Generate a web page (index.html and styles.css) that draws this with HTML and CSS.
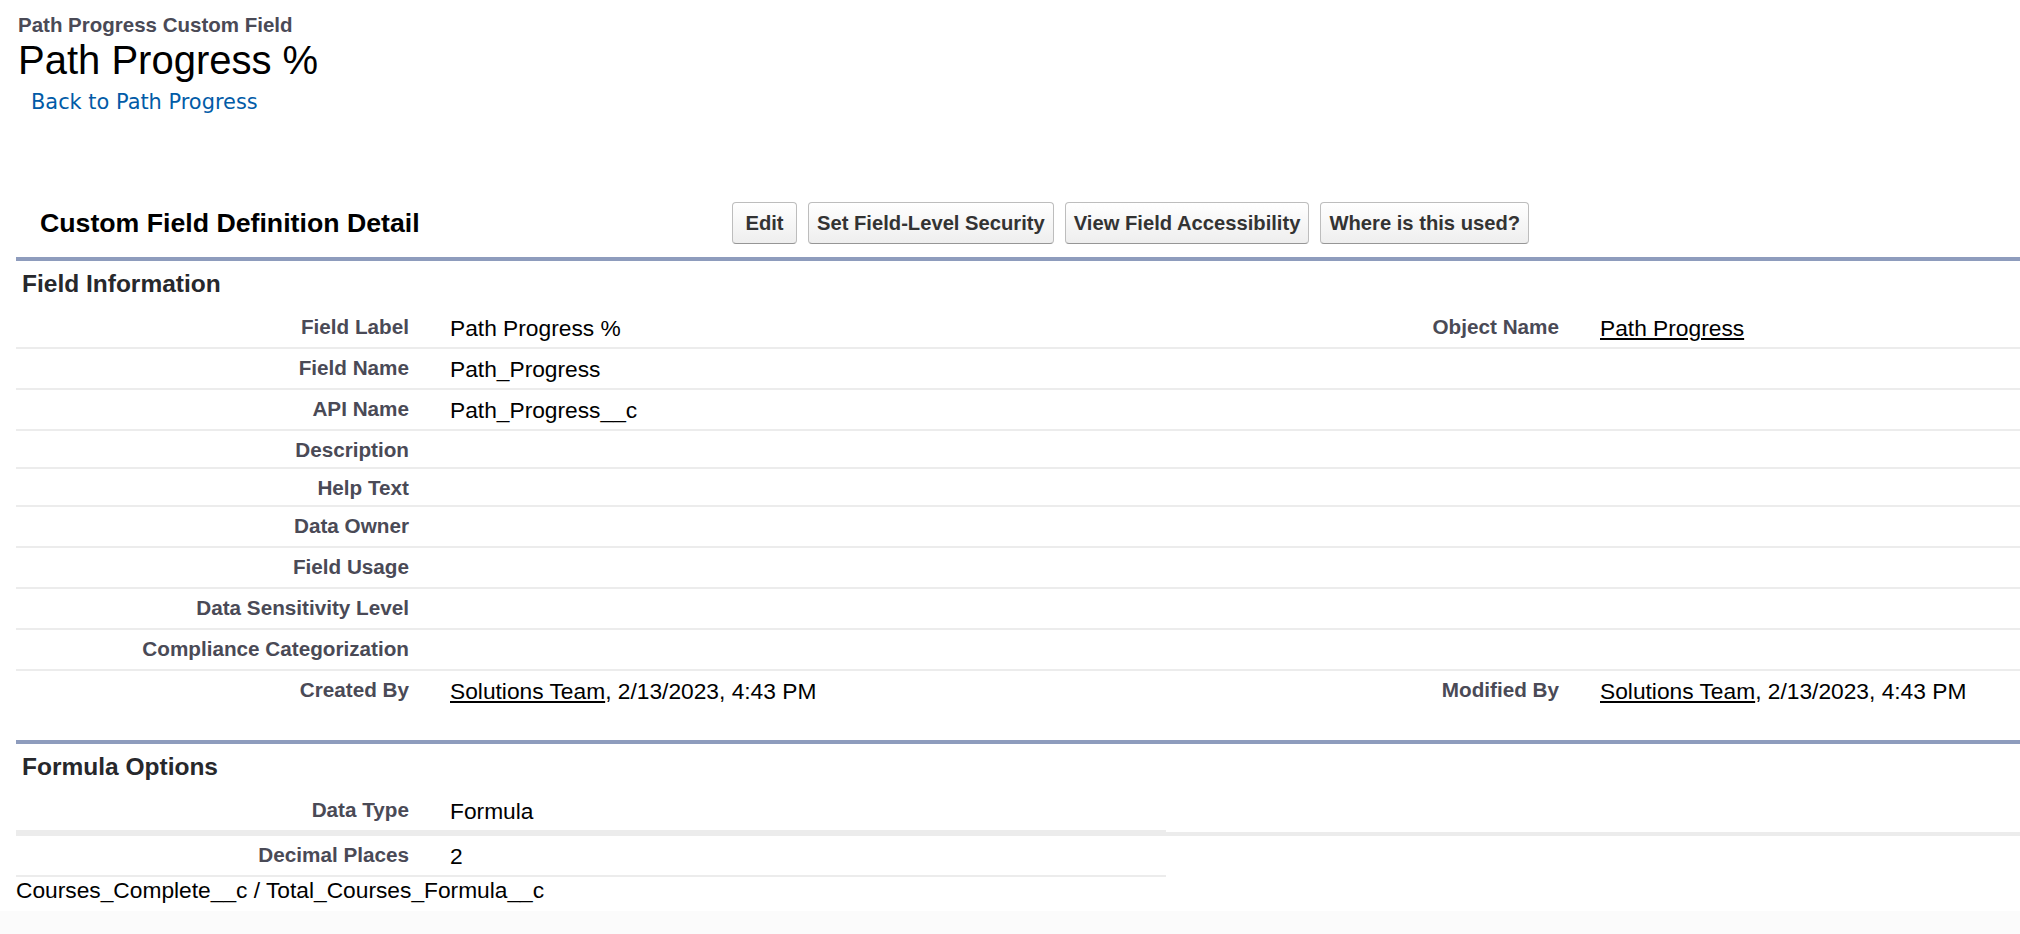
FILE: index.html
```html
<!DOCTYPE html>
<html lang="en">
<head>
<meta charset="UTF-8">
<title>Path Progress % - Custom Field</title>
<link rel="stylesheet" href="styles.css">
</head>
<body>
<div class="page">
  <div class="bPageTitle">
    <div class="pageType">Path Progress Custom Field</div>
    <h1 class="pageDescription">Path Progress %</h1>
    <div class="ptBreadcrumb"><a href="#">Back to Path Progress</a></div>
  </div>

  <div class="pbHeader">
    <div class="pbTitle"><h2>Custom Field Definition Detail</h2></div>
    <div class="pbButton">
      <button class="btn btn-edit">Edit</button>
      <button class="btn">Set Field-Level Security</button>
      <button class="btn">View Field Accessibility</button>
      <button class="btn">Where is this used?</button>
    </div>
  </div>

  <div class="pbSection">
    <h3 class="pbSubheader">Field Information</h3>
    <table class="detailList">
      <colgroup><col class="c-label"><col class="c-data"><col class="c-label"><col class="c-data"></colgroup>
      <tr>
        <td class="labelCol">Field Label</td><td class="dataCol">Path Progress %</td>
        <td class="labelCol">Object Name</td><td class="dataCol"><a href="#">Path Progress</a></td>
      </tr>
      <tr>
        <td class="labelCol">Field Name</td><td class="dataCol">Path_Progress</td>
        <td class="labelCol"></td><td class="dataCol"></td>
      </tr>
      <tr>
        <td class="labelCol">API Name</td><td class="dataCol">Path_Progress__c</td>
        <td class="labelCol"></td><td class="dataCol"></td>
      </tr>
      <tr>
        <td class="labelCol">Description</td><td class="dataCol"></td>
        <td class="labelCol"></td><td class="dataCol"></td>
      </tr>
      <tr>
        <td class="labelCol">Help Text</td><td class="dataCol"></td>
        <td class="labelCol"></td><td class="dataCol"></td>
      </tr>
      <tr>
        <td class="labelCol">Data Owner</td><td class="dataCol">&nbsp;</td>
        <td class="labelCol"></td><td class="dataCol"></td>
      </tr>
      <tr>
        <td class="labelCol">Field Usage</td><td class="dataCol">&nbsp;</td>
        <td class="labelCol"></td><td class="dataCol"></td>
      </tr>
      <tr>
        <td class="labelCol">Data Sensitivity Level</td><td class="dataCol">&nbsp;</td>
        <td class="labelCol"></td><td class="dataCol"></td>
      </tr>
      <tr>
        <td class="labelCol">Compliance Categorization</td><td class="dataCol">&nbsp;</td>
        <td class="labelCol"></td><td class="dataCol"></td>
      </tr>
      <tr class="last">
        <td class="labelCol">Created By</td><td class="dataCol"><a href="#">Solutions Team</a>, 2/13/2023, 4:43 PM</td>
        <td class="labelCol">Modified By</td><td class="dataCol"><a href="#">Solutions Team</a>, 2/13/2023, 4:43 PM</td>
      </tr>
    </table>
  </div>

  <div class="pbSection">
    <h3 class="pbSubheader">Formula Options</h3>
    <table class="detailList half">
      <colgroup><col class="c-label"><col class="c-data"></colgroup>
      <tr>
        <td class="labelCol">Data Type</td><td class="dataCol">Formula</td>
      </tr>
    </table>
    <div class="formulaBody">
      <table class="detailList half">
        <colgroup><col class="c-label"><col class="c-data"></colgroup>
        <tr>
          <td class="labelCol">Decimal Places</td><td class="dataCol">2</td>
        </tr>
      </table>
      <div class="formulaText">Courses_Complete__c / Total_Courses_Formula__c</div>
    </div>
  </div>
</div>
<div class="pageFooter"></div>
</body>
</html>
```

FILE: styles.css
```css
body {
  margin: 0;
  background: #fff;
  color: #000;
  font-family: "Liberation Sans", Arial, sans-serif;
  overflow: hidden;
}
.page {
  width: 2300px;
  margin-left: 16px;
}

/* page title */
.bPageTitle { padding: 13px 0 0 2px; }
.pageType {
  font-size: 20.5px;
  font-weight: bold;
  line-height: 24px;
  color: #4a4a56;
}
.pageDescription {
  margin: 0;
  font-size: 40px;
  font-weight: normal;
  line-height: 47px;
}
.ptBreadcrumb {
  margin-top: 6px;
  padding-left: 13px;
  font-family: "DejaVu Sans", Verdana, sans-serif;
  font-size: 20.9px;
  line-height: 24px;
}
.ptBreadcrumb a { color: #015ba7; text-decoration: none; }

/* block header + buttons */
.pbHeader {
  display: flex;
  align-items: center;
  height: 42px;
  margin-top: 88px;
  padding-left: 24px;
}
.pbTitle { width: 692px; flex-shrink: 0; }
.pbTitle h2 {
  margin: 0;
  font-size: 26.7px;
  line-height: 31px;
  font-weight: bold;
}
.pbButton { display: flex; gap: 11px; }
.btn {
  height: 42px;
  padding: 0 8px;
  border: 1px solid #bdbdbd;
  border-bottom-color: #969696;
  border-radius: 4px;
  background: linear-gradient(#ffffff, #eeeeee);
  font-family: "Liberation Sans", Arial, sans-serif;
  font-size: 20.2px;
  font-weight: bold;
  color: #333;
  cursor: pointer;
}
.btn-edit { min-width: 65px; }

/* sections */
.pbSection { border-top: 4px solid #8e9cbd; margin-top: 13px; }
.pbSection + .pbSection { margin-top: 30px; }
.pbSubheader {
  margin: 0;
  padding: 9px 0 10px 6px;
  font-size: 24.5px;
  line-height: 28px;
  font-weight: bold;
  color: #27282c;
}

.detailList { width: 2300px; border-collapse: collapse; table-layout: fixed; }
.detailList.half { width: 1150px; }
.c-label { width: 414px; }
.c-data { width: 736px; }
.detailList td {
  padding: 7px 0 6px;
  vertical-align: top;
  border-bottom: 2px solid #ececec;
}
.detailList tr.last td { border-bottom: none; }
.labelCol {
  padding-right: 21px !important;
  text-align: right;
  font-size: 20.7px;
  line-height: 23px;
  font-weight: bold;
  color: #4a4a56;
}
.dataCol {
  padding-left: 20px !important;
  font-size: 22.75px;
  line-height: 26px;
}
.dataCol a { color: #000; }

.formulaBody { border-top: 4px solid #ececec; }
.formulaText { font-size: 22.75px; line-height: 26px; }

.pageFooter { height: 30px; margin-top: 8px; background: #fbfbfb; }
```
